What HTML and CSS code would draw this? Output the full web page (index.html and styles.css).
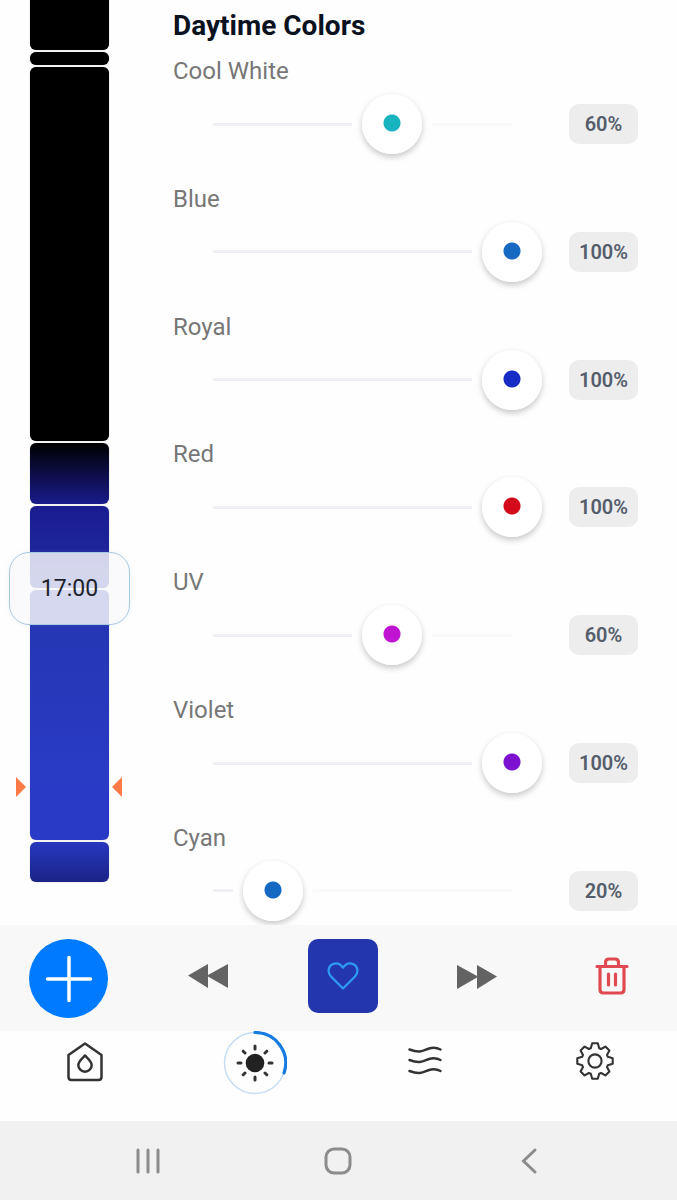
FILE: index.html
```html
<!DOCTYPE html>
<html lang="en">
<head>
    <meta charset="UTF-8">
    <meta name="viewport" content="width=device-width, initial-scale=1.0">
    <title>Daytime Colors</title>
    <link rel="stylesheet" href="styles.css">
</head>

<body>
    <main>
        <section class="timeline" aria-label="Schedule">
            <div class="segment first" style="height: 50px"></div>
            <div class="segment" style="height: 13px"></div>
            <div class="segment" style="height: 374px"></div>
            <div class="segment dawn" style="height: 61px"></div>
            <div class="segment morning" style="height: 82px"></div>
            <div class="segment day" style="height: 250px"></div>
            <div class="segment dusk" style="height: 40px"></div>
            <button class="time">17:00</button>
            <span class="marker left"></span>
            <span class="marker right"></span>
        </section>

        <section class="panel">
            <h1>Daytime Colors</h1>
            <div class="channels">
                <div class="channel cool-white">
                    <label for="cool-white">Cool White</label>
                    <div class="row">
                        <input type="range" id="cool-white" min="0" max="100" value="60" style="--value: 0.6">
                        <output for="cool-white">60%</output>
                    </div>
                </div>
                <div class="channel blue">
                    <label for="blue">Blue</label>
                    <div class="row">
                        <input type="range" id="blue" min="0" max="100" value="100" style="--value: 1">
                        <output for="blue">100%</output>
                    </div>
                </div>
                <div class="channel royal">
                    <label for="royal">Royal</label>
                    <div class="row">
                        <input type="range" id="royal" min="0" max="100" value="100" style="--value: 1">
                        <output for="royal">100%</output>
                    </div>
                </div>
                <div class="channel red">
                    <label for="red">Red</label>
                    <div class="row">
                        <input type="range" id="red" min="0" max="100" value="100" style="--value: 1">
                        <output for="red">100%</output>
                    </div>
                </div>
                <div class="channel uv">
                    <label for="uv">UV</label>
                    <div class="row">
                        <input type="range" id="uv" min="0" max="100" value="60" style="--value: 0.6">
                        <output for="uv">60%</output>
                    </div>
                </div>
                <div class="channel violet">
                    <label for="violet">Violet</label>
                    <div class="row">
                        <input type="range" id="violet" min="0" max="100" value="100" style="--value: 1">
                        <output for="violet">100%</output>
                    </div>
                </div>
                <div class="channel cyan">
                    <label for="cyan">Cyan</label>
                    <div class="row">
                        <input type="range" id="cyan" min="0" max="100" value="20" style="--value: 0.2">
                        <output for="cyan">20%</output>
                    </div>
                </div>
            </div>
        </section>
    </main>

    <div class="actions">
        <button class="add" aria-label="Add">
            <svg width="48" height="48" viewBox="0 0 48 48"><path d="M24 2.500V45.500M2.500 24H45.500" stroke="#fff" stroke-width="3.500" stroke-linecap="round"/></svg>
        </button>
        <button class="skip" aria-label="Previous">
            <svg width="40" height="26" viewBox="0 0 40 26"><path d="M0 12.500L20 1V12L40 1V25L20 13.500V25Z" fill="#636363"/></svg>
        </button>
        <button class="favourite" aria-label="Favourite">
            <svg width="32" height="28" viewBox="0 0 32 28"><path d="M16 26.500L4 14.500C0 10.500 1.300 4 5.500 2.200C9.500 0.500 13.500 2 16 5.700C18.500 2 22.500 0.500 26.500 2.200C30.700 4 32 10.500 28 14.500Z" fill="none" stroke="#2d9bf5" stroke-width="2.200" stroke-linejoin="round"/></svg>
        </button>
        <button class="skip" aria-label="Next">
            <svg width="40" height="26" viewBox="0 0 40 26"><path d="M40 13.500L20 2V13L0 2V26L20 14.500V26Z" fill="#636363"/></svg>
        </button>
        <button class="delete" aria-label="Delete">
            <svg width="34" height="38" viewBox="0 0 34 38"><path d="M2 9.500H32M5 9.500V32.500Q5 36 8.500 36H25.500Q29 36 29 32.500V9.500M10.500 9V5.500Q10.500 2 14 2H20Q23.500 2 23.500 5.500V9M13.500 17V28M20.500 17V28" fill="none" stroke="#e04a50" stroke-width="3.200" stroke-linecap="round"/></svg>
        </button>
    </div>

    <nav>
        <a href="#home" aria-label="Home">
            <svg width="40" height="44" viewBox="-20 -22 40 44"><path d="M0 -17.500L16.500 -6V16Q16.500 19 13.500 19H-13.500Q-16.500 19 -16.500 16V-6ZM0 -5.500C-3 -2.500 -6.700 0.500 -6.700 4A6.700 6.700 0 0 0 6.700 4C6.700 0.500 3 -2.500 0 -5.500Z"/></svg>
        </a>
        <a href="#light" class="current" aria-label="Light">
            <svg width="64" height="64" viewBox="-32 -32 64 64">
                <circle r="30.500" stroke="#c6dcf2" stroke-width="1.500"/>
                <path d="M0 -30.500A30.500 30.500 0 0 1 29 10" stroke="#177ce0" stroke-width="3.200"/>
                <circle r="9.300" fill="#222" stroke="none"/>
                <path d="M0 -17V-14M0 14V17M-17 0H-14M14 0H17M-11.800 -11.800L-10 -10M11.800 -11.800L10 -10M-11.800 11.800L-10 10M11.800 11.800L10 10" stroke-width="3"/>
            </svg>
        </a>
        <a href="#flow" aria-label="Flow">
            <svg width="40" height="44" viewBox="-20 -22 40 44"><path d="M-15.500 -11.500C-4 -7 -1 -11 4 -12.500Q10 -14.500 15.500 -11.500M-15.500 -1C-4 3.500 -1 -0.500 4 -2Q10 -4 15.500 -1M-15.500 10C-4 14.500 -1 10.500 4 9Q10 7 15.500 10"/></svg>
        </a>
        <a href="#settings" aria-label="Settings">
            <svg width="40" height="40" viewBox="-20 -20 40 40"><path stroke-width="2.100" d="M-4.200 -12.800L-2.800 -17.700H2.800L4.200 -12.800L6.100 -12L10.400 -14.400L14.400 -10.400L12 -6.100L12.800 -4.200L17.700 -2.800V2.800L12.800 4.200L12 6.100L14.400 10.400L10.400 14.400L6.100 12L4.200 12.800L2.800 17.700H-2.800L-4.200 12.800L-6.100 12L-10.400 14.400L-14.400 10.400L-12 6.100L-12.800 4.200L-17.700 2.800V-2.800L-12.800 -4.200L-12 -6.100L-14.400 -10.400L-10.400 -14.400L-6.100 -12Z"/><circle r="6.600" stroke-width="2.100"/></svg>
        </a>
    </nav>

    <footer>
        <button aria-label="Recent apps">
            <svg width="28" height="28" viewBox="0 0 28 28"><path d="M4 3V25M14 3V25M24 3V25"/></svg>
        </button>
        <button aria-label="Home screen">
            <svg width="28" height="28" viewBox="0 0 28 28"><rect x="2" y="2" width="24" height="24" rx="8"/></svg>
        </button>
        <button aria-label="Back">
            <svg width="28" height="28" viewBox="0 0 28 28"><path d="M20 3L8.500 14L20 25"/></svg>
        </button>
    </footer>

    <script>
        document.querySelectorAll("input[type=range]").forEach((slider) => {
            slider.addEventListener("input", () => {
                slider.style.setProperty("--value", slider.value / 100);
                slider.nextElementSibling.value = `${slider.value}%`;
            });
        });
    </script>
</body>
</html>
```
FILE: styles.css
```css
* {
    box-sizing: border-box;
    margin: 0;
    padding: 0;
}

body {
    background-color: #fefefe;
    display: flex;
    flex-direction: column;
    font-family: Roboto, sans-serif;
    min-height: 100vh;
}

button {
    align-items: center;
    background: none;
    border: none;
    cursor: pointer;
    display: flex;
    font-family: inherit;
    justify-content: center;
}

svg {
    display: block;
}

main {
    display: flex;
    flex: 1;
}

/* schedule bar */
.timeline {
    display: flex;
    flex: none;
    flex-direction: column;
    gap: 2px;
    padding: 0 30px;
    position: relative;
    width: 139px;
}

.segment {
    background-color: #000;
    border-radius: 6px;
    box-shadow: 0 0 1px #888;
    flex: none;
}

.segment.first {
    border-radius: 0 0 6px 6px;
}

.segment.dawn {
    background: linear-gradient(#000, #191b8c);
}

.segment.morning {
    background: linear-gradient(#1a1b90, #222ea6);
}

.segment.day {
    background: linear-gradient(#2535b0, #293bc6 80%);
}

.segment.dusk {
    background: linear-gradient(#2637be, #1b2487);
}

.time {
    background-color: rgba(249, 249, 251, 0.83);
    border: 1px solid #a9c8e2;
    border-radius: 20px;
    box-shadow: 0 0 5px rgba(120, 170, 220, 0.12);
    color: #20222c;
    font-size: 23px;
    height: 73px;
    left: 9px;
    position: absolute;
    top: 552px;
    width: 121px;
}

.marker {
    border: 10px solid transparent;
    height: 0;
    position: absolute;
    top: 777px;
    width: 0;
}

.marker.left {
    border-left-color: #fb7a46;
    border-right-width: 0;
    left: 16px;
}

.marker.right {
    border-left-width: 0;
    border-right-color: #fb7a46;
    right: 17px;
}

/* colour channels */
.panel {
    display: flex;
    flex: 1;
    flex-direction: column;
    gap: 15px;
    padding: 10px 39px 4px 34px;
}

h1 {
    color: #0b121f;
    font-size: 28px;
    font-weight: 700;
    line-height: 32px;
}

.channels {
    display: flex;
    flex: 1;
    flex-direction: column;
    justify-content: space-between;
}

.channel label {
    color: #777;
    display: block;
    font-size: 24px;
    line-height: 28px;
    margin-bottom: 9px;
}

.row {
    align-items: center;
    display: flex;
    gap: 27px;
    padding-left: 10px;
}

.row input {
    --center: calc(30px + (100% - 60px) * var(--value));
    -webkit-appearance: none;
    appearance: none;
    background: linear-gradient(to right,
        transparent 30px,
        #eff0f4 30px,
        #eff0f4 calc(var(--center) - 40px),
        transparent calc(var(--center) - 40px),
        transparent calc(var(--center) + 40px),
        #fafafb calc(var(--center) + 40px),
        #fafafb calc(100% - 30px),
        transparent calc(100% - 30px)) center / 100% 3px no-repeat;
    flex: 1;
    height: 60px;
    min-width: 0;
}

.row input::-webkit-slider-thumb {
    -webkit-appearance: none;
    background: radial-gradient(circle at 50% 29px, var(--color) 8px, #fff 9px);
    border-radius: 50%;
    box-shadow: 0 3px 6px rgba(0, 0, 0, 0.22);
    height: 60px;
    width: 60px;
}

.row output {
    background-color: #ededed;
    border-radius: 10px;
    color: #555d6b;
    font-size: 20px;
    font-weight: 600;
    line-height: 40px;
    text-align: center;
    width: 69px;
}

.cool-white {
    --color: #17b3c1;
}

.blue,
.cyan {
    --color: #1669c3;
}

.royal {
    --color: #172cc4;
}

.red {
    --color: #d40a1b;
}

.uv {
    --color: #c014d2;
}

.violet {
    --color: #7c12cf;
}

/* bottom bars */
.actions {
    align-items: flex-start;
    background-color: #f8f8f8;
    display: flex;
    justify-content: space-between;
    padding: 14px 30px 13px 29px;
    position: relative;
}

.actions button {
    height: 74px;
    width: 70px;
}

.actions .add {
    background-color: #007bff;
    border-radius: 50%;
    height: 79px;
    width: 79px;
}

.actions .skip {
    width: 40px;
}

.actions .favourite {
    background-color: #2436ae;
    border-radius: 10px;
}

nav {
    align-items: flex-start;
    display: flex;
    height: 90px;
    justify-content: space-between;
    padding: 0 50px 0 53px;
}

nav a {
    align-items: center;
    display: flex;
    height: 60px;
    justify-content: center;
    width: 64px;
}

nav a.current {
    height: 64px;
}

nav svg {
    fill: none;
    stroke: #333;
    stroke-linecap: round;
    stroke-linejoin: round;
    stroke-width: 2.5;
}

footer {
    background-color: #f1f1f1;
    display: grid;
    grid-template-columns: repeat(3, 1fr);
    height: 79px;
    padding: 0 53px;
}

footer svg {
    fill: none;
    stroke: #8c8c8c;
    stroke-linecap: round;
    stroke-width: 3;
}
```
